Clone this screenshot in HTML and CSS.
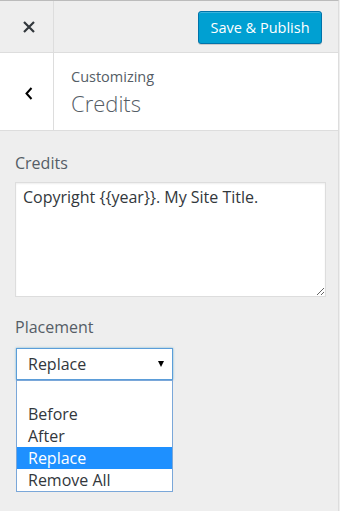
FILE: index.html
```html
<!DOCTYPE html>
<html lang="en">
<head>
  <meta charset="UTF-8">
  <meta name="viewport" content="width=device-width, initial-scale=1.0">
  <title>Customizing Credits</title>
  <link rel="stylesheet" href="styles.css">
</head>
<body>
  <div class="panel">
    <div class="header">
      <div class="close">
        <svg width="12" height="12" viewBox="0 0 12 12">
          <path d="M1 1 L11 11 M11 1 L1 11" stroke="#32373c" stroke-width="2.2" fill="none"/>
        </svg>
      </div>
      <button class="publish">Save &amp; Publish</button>
    </div>

    <div class="section-head">
      <div class="back">
        <svg width="8" height="13" viewBox="0 0 8 13">
          <path d="M6.5 1 L1.5 6.5 L6.5 12" stroke="#000" stroke-width="2" fill="none"/>
        </svg>
      </div>
      <div class="titles">
        <span class="crumb">Customizing</span>
        <span class="title">Credits</span>
      </div>
    </div>

    <div class="content">
      <label class="control-title" for="credits">Credits</label>
      <textarea id="credits" class="credits-text">Copyright {{year}}. My Site Title.</textarea>

      <span class="control-title placement-title">Placement</span>
      <div class="select-wrap">
        <div class="select">
          <span>Replace</span>
          <span class="arrow"></span>
        </div>
        <ul class="options">
          <li class="blank"></li>
          <li>Before</li>
          <li>After</li>
          <li class="selected">Replace</li>
          <li>Remove All</li>
        </ul>
      </div>
    </div>
  </div>
</body>
</html>
```

FILE: styles.css
```css
body {
  margin: 0;
  font-family: "Open Sans", sans-serif;
  background: #eee;
}

.panel {
  width: 339px;
  height: 511px;
  box-sizing: border-box;
  border-right: 1px solid #ddd;
  border-top: 1px solid #bbb;
  background: #eee;
}

.header {
  display: flex;
  justify-content: space-between;
  align-items: center;
  height: 52px;
  box-sizing: border-box;
  border-bottom: 1px solid #ddd;
  padding-right: 16px;
}

.close {
  width: 54px;
  height: 51px;
  box-sizing: border-box;
  padding-left: 4px;
  border-right: 1px solid #ddd;
  display: flex;
  align-items: center;
  justify-content: center;
}

.publish {
  font-family: "Open Sans", sans-serif;
  font-size: 14.5px;
  color: #fff;
  background: #00a0d2;
  border: 1px solid #0073aa;
  border-radius: 3px;
  height: 33px;
  width: 124px;
  padding: 0;
  margin-top: 2px;
  box-shadow: inset 0 1px 0 rgba(120, 200, 230, 0.5), 0 1px 0 rgba(0, 0, 0, 0.15);
}

.section-head {
  display: flex;
  height: 78px;
  box-sizing: border-box;
  background: #fff;
  border-bottom: 1px solid #ddd;
}

.back {
  width: 54px;
  box-sizing: border-box;
  padding: 3px 0 0 5px;
  border-right: 1px solid #ddd;
  display: flex;
  align-items: center;
  justify-content: center;
}

.titles {
  display: flex;
  flex-direction: column;
  padding: 14px 0 0 17px;
  color: #555d66;
}

.crumb {
  font-size: 14.5px;
  line-height: 20px;
}

.title {
  font-size: 22px;
  font-weight: 300;
  line-height: 30px;
  margin-top: 1px;
}

.content {
  padding: 20px 0 0 15px;
}

.control-title {
  display: block;
  font-size: 16px;
  color: #555d66;
  line-height: 24px;
  margin-bottom: 7px;
}

.credits-text {
  display: block;
  width: 311px;
  height: 115px;
  box-sizing: border-box;
  border: 1px solid #ddd;
  box-shadow: inset 0 1px 2px rgba(0, 0, 0, 0.07);
  padding: 3px 7px;
  font-family: "Open Sans", sans-serif;
  font-size: 16px;
  line-height: 22px;
  color: #32373c;
  margin: 0 0 18px;
}

.placement-title {
  margin-bottom: 9px;
}

.select-wrap {
  position: relative;
  margin-left: 1px;
  width: 157px;
}

.select {
  display: flex;
  justify-content: space-between;
  align-items: center;
  height: 32px;
  box-sizing: border-box;
  border: 1px solid #5b9dd9;
  box-shadow: 0 0 2px rgba(30, 140, 190, 0.6);
  background: #fff;
  padding: 0 8px 0 11px;
  font-size: 16px;
  color: #32373c;
}

.arrow {
  width: 0;
  height: 0;
  border-left: 3.5px solid transparent;
  border-right: 3.5px solid transparent;
  border-top: 6px solid #000;
}

.options {
  position: absolute;
  top: 32px;
  left: 0;
  width: 157px;
  box-sizing: border-box;
  margin: 0;
  padding: 0;
  list-style: none;
  background: #fff;
  border: 1px solid #7aa7d9;
  font-size: 16px;
  color: #32373c;
}

.options li {
  height: 22px;
  line-height: 22px;
  padding-left: 11px;
}

.options .selected {
  background: #1e90ff;
  color: #fff;
}
```
